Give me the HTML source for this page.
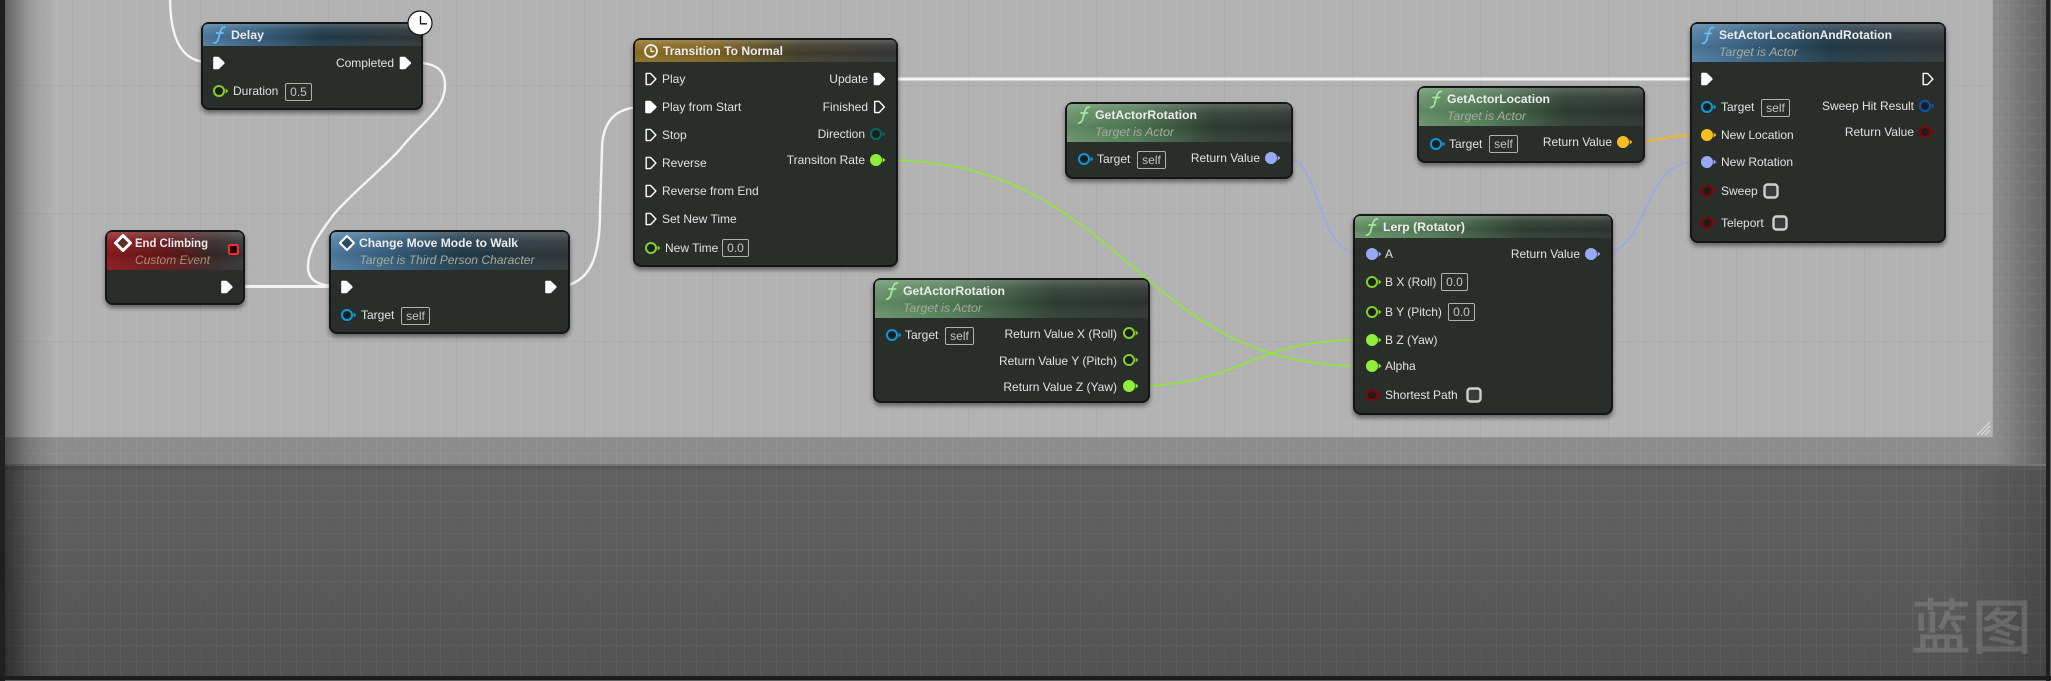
<!DOCTYPE html>
<html><head><meta charset="utf-8"><title>Blueprint</title>
<style>
html,body{margin:0;padding:0;background:#555;width:2051px;height:681px;overflow:hidden}
svg{display:block}
text{font-family:"Liberation Sans","Noto Sans CJK SC",sans-serif;font-size:12px;fill:#e2e2e2}
.t{font-weight:bold;fill:#ececec}
.s{font-style:italic;fill:#a3ad98}
.b{fill:#c4c4c4;text-anchor:middle}
.r{text-anchor:end}
.box{fill:none;stroke:#b0b0b0;stroke-width:1}
.cb{fill:#3a3c3a;stroke:#cfcfcf;stroke-width:2.4}
.n{fill:#2c2d2c;stroke:#121212;stroke-width:2}
.w{fill:none;stroke-linecap:round}
</style></head><body>
<svg width="2051" height="681" viewBox="0 0 2051 681" xmlns="http://www.w3.org/2000/svg">
<defs>
<pattern id="gm" width="16" height="16" patternUnits="userSpaceOnUse" x="8" y="5">
<rect width="1" height="16" fill="#fff" fill-opacity=".05"/><rect width="16" height="1" fill="#fff" fill-opacity=".05"/>
</pattern>
<pattern id="gM" width="128" height="128" patternUnits="userSpaceOnUse" x="72" y="85">
<rect width="1" height="128" fill="#000" fill-opacity=".06"/><rect width="128" height="1" fill="#000" fill-opacity=".06"/>
</pattern>
<linearGradient id="vl" x1="0" x2="1" y1="0" y2="0"><stop offset="0" stop-color="#000" stop-opacity=".45"/><stop offset=".5" stop-color="#000" stop-opacity=".13"/><stop offset="1" stop-color="#000" stop-opacity="0"/></linearGradient>
<linearGradient id="vr" x1="0" x2="1" y1="0" y2="0"><stop offset="0" stop-color="#8e8e8e"/><stop offset="1" stop-color="#636363"/></linearGradient>
<linearGradient id="vb" x1="0" x2="0" y1="0" y2="1"><stop offset="0" stop-color="#000" stop-opacity="0"/><stop offset="1" stop-color="#000" stop-opacity=".16"/></linearGradient>
<linearGradient id="vd" x1="0" x2="1" y1="0" y2="0"><stop offset="0" stop-color="#000" stop-opacity="0"/><stop offset="1" stop-color="#000" stop-opacity=".18"/></linearGradient>

<linearGradient id="blue" x1="0" x2="1" y1="0" y2="0"><stop offset="0" stop-color="#4d7ea4"/><stop offset=".25" stop-color="#376080"/><stop offset=".55" stop-color="#223c4c"/><stop offset=".8" stop-color="#2b3a42"/><stop offset="1" stop-color="#33383a"/></linearGradient>
<linearGradient id="green" x1="0" x2="1" y1="0" y2="0"><stop offset="0" stop-color="#67936a"/><stop offset=".3" stop-color="#527a55"/><stop offset=".65" stop-color="#2f4034"/><stop offset="1" stop-color="#2f3431"/></linearGradient>
<linearGradient id="red" x1="0" x2="1" y1="0" y2="0"><stop offset="0" stop-color="#8c1a1e"/><stop offset=".45" stop-color="#641719"/><stop offset=".8" stop-color="#362a2a"/><stop offset="1" stop-color="#363838"/></linearGradient>
<linearGradient id="gold" x1="0" x2="1" y1="0" y2="0"><stop offset="0" stop-color="#8e7026"/><stop offset=".3" stop-color="#7f6524"/><stop offset=".62" stop-color="#43402c"/><stop offset="1" stop-color="#363838"/></linearGradient>
<linearGradient id="hl" x1="0" x2="0" y1="0" y2="1"><stop offset="0" stop-color="#fff" stop-opacity=".2"/><stop offset=".25" stop-color="#fff" stop-opacity=".05"/><stop offset=".6" stop-color="#000" stop-opacity=".08"/><stop offset="1" stop-color="#fff" stop-opacity=".03"/></linearGradient>

<filter id="sh" x="-10%" y="-10%" width="120%" height="130%"><feDropShadow dx="0" dy="3" stdDeviation="2.5" flood-color="#000" flood-opacity=".45"/></filter>

<path id="ef" d="M0,-5.4 Q0,-6 .8,-6 H5 L10.6,-.6 Q11,0 10.6,.6 L5,6 H.8 Q0,6 0,5.4Z" fill="#fff" stroke="#fff" stroke-width=".6"/>
<path id="eo" d="M.7,-5.6 H5 L10.4,0 L5,5.6 H.7Z" fill="none" stroke="#fff" stroke-width="1.4" stroke-linejoin="round"/>
<g id="po"><circle r="5" fill="#1c1e1c" stroke="currentColor" stroke-width="2"/><path d="M6.6,-2.6 L9.4,0 L6.6,2.6Z" fill="currentColor"/></g>
<g id="pf"><circle r="6" fill="currentColor"/><path d="M6.6,-2.6 L9.4,0 L6.6,2.6Z" fill="currentColor"/></g>
<path id="fi" d="M-5.5,8 Q-2,8 -1,3 L1,-4 Q2,-8 5.5,-8 M-3,-2 H3.5" fill="none" stroke="currentColor" stroke-width="1.7" stroke-linecap="round"/>
</defs>

<!-- background -->
<rect width="2051" height="681" fill="#626262"/>
<rect x="5" y="0" width="1988" height="437" fill="#b2b2b2"/>
<rect x="5" y="437" width="1988" height="28" fill="#8d8d8d"/>
<rect x="1993" y="0" width="53" height="465" fill="url(#vr)"/>
<rect x="5" y="464" width="2041" height="2" fill="#757575"/>
<rect x="5" y="466" width="2041" height="4" fill="#585858"/>
<rect x="5" y="470" width="2041" height="206" fill="url(#vb)"/>
<rect x="1950" y="470" width="96" height="206" fill="url(#vd)"/>
<rect x="5" y="0" width="2041" height="676" fill="url(#gm)"/>
<rect x="5" y="0" width="2041" height="676" fill="url(#gM)"/>
<rect x="5" y="0" width="50" height="676" fill="url(#vl)"/>
<rect x="0" y="0" width="5" height="681" fill="#202020"/>
<rect x="2046" y="0" width="4" height="681" fill="#202020"/>
<rect x="0" y="676" width="2051" height="4" fill="#1c1c1c"/>
<!-- resize grip -->
<path d="M1977,435 L1990,422 M1981,435 L1990,426 M1985,435 L1990,430" stroke="#e4e4e4" stroke-width="1" fill="none"/>
<!-- watermark -->
<text x="1911" y="649" style="font-size:60px;letter-spacing:1px;font-weight:500;fill:#fff;fill-opacity:.15;font-family:'Noto Sans CJK SC',sans-serif">蓝图</text>

<!-- wires -->
<g class="wires">
<path class="w" stroke="#f4f4f4" stroke-width="2.4" d="M170,-4 C170,36 180,60 205,62"/>
<path class="w" stroke="#f4f4f4" stroke-width="2.4" d="M412,63 C433,62 445,68 445,85 C445,110 422,122 402,147 C390,162 350,195 335,213 C318,235 308,250 308,267 C308,280 318,285 332,286"/>
<path class="w" stroke="#f4f4f4" stroke-width="3" d="M240,286.5 L332,286.5"/>
<path class="w" stroke="#f4f4f4" stroke-width="2.4" d="M560,287 C588,283 600,262 600,212 L602,150 C602,122 615,108 640,107"/>
<path class="w" stroke="#f6f6f6" stroke-width="3" d="M890,79 L1695,79"/>
<path class="w" stroke="#8ee63e" stroke-width="1.8" d="M885,160 C1125,160 1135,366 1360,366"/>
<path class="w" stroke="#8ee63e" stroke-width="1.8" d="M1135,386 C1240,386 1250,340 1358,340"/>
<path class="w" stroke="#98a8ea" stroke-width="1.6" d="M1285,158 C1322,158 1316,254 1360,254"/>
<path class="w" stroke="#98a8ea" stroke-width="1.6" d="M1600,254 C1650,254 1640,162 1695,162"/>
<path class="w" stroke="#f3b924" stroke-width="2" d="M1630,142 C1660,142 1665,135 1700,135"/>
</g>

<!-- Delay -->
<g filter="url(#sh)"><rect class="n" x="202" y="23" width="220" height="86" rx="7"/></g>
<path d="M203,46 V29 Q203,24 208,24 H416 Q421,24 421,29 V46Z" fill="url(#blue)"/><path d="M203,46 V29 Q203,24 208,24 H416 Q421,24 421,29 V46Z" fill="url(#hl)"/>
<use href="#fi" x="219.5" y="35" color="#6cbcf2"/>
<text class="t" x="231" y="39" textLength="33" lengthAdjust="spacingAndGlyphs">Delay</text>
<circle cx="420" cy="23" r="12" fill="#fff" stroke="#111" stroke-width="1.2"/>
<path d="M420.5,16 V23.8 H427" fill="none" stroke="#111" stroke-width="1.3"/>
<use href="#ef" x="213.5" y="63"/>
<text class="r" x="394" y="67">Completed</text>
<use href="#ef" x="400" y="63"/>
<use href="#po" x="219" y="91" color="#7fd22c"/>
<text x="233" y="95">Duration</text>
<rect class="box" x="285.5" y="83.5" width="26" height="17" rx="1.5"/><text class="b" x="298.5" y="96">0.5</text>

<!-- End Climbing -->
<g filter="url(#sh)"><rect class="n" x="106" y="231" width="138" height="73" rx="7"/></g>
<path d="M107,270 V237 Q107,232 112,232 H238 Q243,232 243,237 V270Z" fill="url(#red)"/><path d="M107,270 V237 Q107,232 112,232 H238 Q243,232 243,237 V270Z" fill="url(#hl)"/>
<path d="M123,235.5 L130.5,243 L123,250.5 L115.5,243Z" fill="#532" stroke="#fff" stroke-width="3" stroke-linejoin="round"/>
<text class="t" x="135" y="247" textLength="73" lengthAdjust="spacingAndGlyphs">End Climbing</text>
<text class="s" x="135" y="264" textLength="75" lengthAdjust="spacingAndGlyphs" style="fill:#ab8d72">Custom Event</text>
<rect x="229" y="245" width="9" height="9" rx="1.5" fill="#200" stroke="#ff2b2b" stroke-width="2"/>
<use href="#ef" x="221.5" y="287"/>

<!-- Change Move Mode -->
<g filter="url(#sh)"><rect class="n" x="330" y="231" width="239" height="102" rx="7"/></g>
<path d="M331,270 V237 Q331,232 336,232 H563 Q568,232 568,237 V270Z" fill="url(#blue)"/><path d="M331,270 V237 Q331,232 336,232 H563 Q568,232 568,237 V270Z" fill="url(#hl)"/>
<path d="M347,236 L354,243 L347,250 L340,243Z" fill="#2c4a60" stroke="#fff" stroke-width="2" stroke-linejoin="round"/>
<text class="t" x="359" y="247" textLength="159" lengthAdjust="spacingAndGlyphs">Change Move Mode to Walk</text>
<text class="s" x="359.5" y="264" textLength="175" lengthAdjust="spacingAndGlyphs">Target is Third Person Character</text>
<use href="#ef" x="341.5" y="287"/><use href="#ef" x="545.5" y="287"/>
<use href="#po" x="347" y="315" color="#0a9ae2"/>
<text x="361" y="319">Target</text>
<rect class="box" x="401.5" y="307.5" width="28" height="17" rx="1.5"/><text class="b" x="415.5" y="320">self</text>

<!-- Transition -->
<g filter="url(#sh)"><rect class="n" x="634" y="39" width="263" height="227" rx="7"/></g>
<path d="M635,62 V45 Q635,40 640,40 H891 Q896,40 896,45 V62Z" fill="url(#gold)"/><path d="M635,62 V45 Q635,40 640,40 H891 Q896,40 896,45 V62Z" fill="url(#hl)"/>
<circle cx="651" cy="51" r="6" fill="none" stroke="#f0f0f0" stroke-width="1.8"/><path d="M651,47.5 V51.5 H654.5" fill="none" stroke="#f0f0f0" stroke-width="1.3"/>
<text class="t" x="663" y="55" textLength="120" lengthAdjust="spacingAndGlyphs">Transition To Normal</text>
<use href="#eo" x="645.5" y="79"/><text x="662" y="83">Play</text>
<use href="#ef" x="645.5" y="107"/><text x="662" y="111">Play from Start</text>
<use href="#eo" x="645.5" y="135"/><text x="662" y="139">Stop</text>
<use href="#eo" x="645.5" y="163"/><text x="662" y="167">Reverse</text>
<use href="#eo" x="645.5" y="191"/><text x="662" y="195">Reverse from End</text>
<use href="#eo" x="645.5" y="219"/><text x="662" y="223">Set New Time</text>
<use href="#po" x="651" y="248" color="#7fd22c"/><text x="665" y="252">New Time</text>
<rect class="box" x="722.5" y="239.5" width="26" height="17" rx="1.5"/><text class="b" x="735.5" y="252">0.0</text>
<text class="r" x="868" y="83">Update</text><use href="#ef" x="874" y="79"/>
<text class="r" x="868" y="111">Finished</text><use href="#eo" x="874" y="107"/>
<text class="r" x="865" y="138">Direction</text><use href="#po" x="876" y="134" color="#006b62"/>
<text class="r" x="865" y="164">Transiton Rate</text><use href="#pf" x="876" y="160" color="#90ee3a"/>

<!-- GetActorRotation top -->
<g filter="url(#sh)"><rect class="n" x="1066" y="103" width="226" height="75" rx="7"/></g>
<path d="M1067,142 V109 Q1067,104 1072,104 H1286 Q1291,104 1291,109 V142Z" fill="url(#green)"/><path d="M1067,142 V109 Q1067,104 1072,104 H1286 Q1291,104 1291,109 V142Z" fill="url(#hl)"/>
<use href="#fi" x="1084" y="115" color="#a4e8a0"/>
<text class="t" x="1095" y="119" textLength="102" lengthAdjust="spacingAndGlyphs">GetActorRotation</text>
<text class="s" x="1095" y="136" textLength="79" lengthAdjust="spacingAndGlyphs">Target is Actor</text>
<use href="#po" x="1084" y="159" color="#0a9ae2"/><text x="1097" y="163">Target</text>
<rect class="box" x="1137.5" y="151.5" width="28" height="17" rx="1.5"/><text class="b" x="1151.5" y="164">self</text>
<text class="r" x="1260" y="162">Return Value</text><use href="#pf" x="1271" y="158" color="#9aa9f4"/>

<!-- GetActorRotation bottom -->
<g filter="url(#sh)"><rect class="n" x="874" y="279" width="275" height="123" rx="7"/></g>
<path d="M875,318 V285 Q875,280 880,280 H1143 Q1148,280 1148,285 V318Z" fill="url(#green)"/><path d="M875,318 V285 Q875,280 880,280 H1143 Q1148,280 1148,285 V318Z" fill="url(#hl)"/>
<use href="#fi" x="892" y="291" color="#a4e8a0"/>
<text class="t" x="903" y="295" textLength="102" lengthAdjust="spacingAndGlyphs">GetActorRotation</text>
<text class="s" x="903" y="312" textLength="79" lengthAdjust="spacingAndGlyphs">Target is Actor</text>
<use href="#po" x="892" y="335" color="#0a9ae2"/><text x="905" y="339">Target</text>
<rect class="box" x="945.5" y="327.5" width="28" height="17" rx="1.5"/><text class="b" x="959.5" y="340">self</text>
<text class="r" x="1117" y="338">Return Value X (Roll)</text><use href="#po" x="1129" y="333" color="#7fd22c"/>
<text class="r" x="1117" y="365">Return Value Y (Pitch)</text><use href="#po" x="1129" y="360" color="#7fd22c"/>
<text class="r" x="1117" y="391">Return Value Z (Yaw)</text><use href="#pf" x="1129" y="386" color="#90ee3a"/>

<!-- GetActorLocation -->
<g filter="url(#sh)"><rect class="n" x="1418" y="87" width="226" height="75" rx="7"/></g>
<path d="M1419,126 V93 Q1419,88 1424,88 H1638 Q1643,88 1643,93 V126Z" fill="url(#green)"/><path d="M1419,126 V93 Q1419,88 1424,88 H1638 Q1643,88 1643,93 V126Z" fill="url(#hl)"/>
<use href="#fi" x="1436" y="99.5" color="#a4e8a0"/>
<text class="t" x="1447" y="103" textLength="103" lengthAdjust="spacingAndGlyphs">GetActorLocation</text>
<text class="s" x="1447" y="120" textLength="79" lengthAdjust="spacingAndGlyphs">Target is Actor</text>
<use href="#po" x="1436" y="144" color="#0a9ae2"/><text x="1449" y="148">Target</text>
<rect class="box" x="1489.5" y="135.5" width="28" height="17" rx="1.5"/><text class="b" x="1503.5" y="148">self</text>
<text class="r" x="1612" y="146">Return Value</text><use href="#pf" x="1623" y="142" color="#f8bd20"/>

<!-- Lerp -->
<g filter="url(#sh)"><rect class="n" x="1354" y="215" width="258" height="199" rx="7"/></g>
<path d="M1355,238 V221 Q1355,216 1360,216 H1606 Q1611,216 1611,221 V238Z" fill="url(#green)"/><path d="M1355,238 V221 Q1355,216 1360,216 H1606 Q1611,216 1611,221 V238Z" fill="url(#hl)"/>
<use href="#fi" x="1372" y="227" color="#a4e8a0"/>
<text class="t" x="1383" y="231" textLength="82" lengthAdjust="spacingAndGlyphs">Lerp (Rotator)</text>
<use href="#pf" x="1372" y="254" color="#9aa9f4"/><text x="1385" y="258">A</text>
<use href="#po" x="1372" y="282" color="#7fd22c"/><text x="1385" y="286">B X (Roll)</text>
<rect class="box" x="1441.5" y="273.5" width="26" height="17" rx="1.5"/><text class="b" x="1454.5" y="286">0.0</text>
<use href="#po" x="1372" y="312" color="#7fd22c"/><text x="1385" y="316">B Y (Pitch)</text>
<rect class="box" x="1448.5" y="303.5" width="26" height="17" rx="1.5"/><text class="b" x="1461.5" y="316">0.0</text>
<use href="#pf" x="1372" y="340" color="#90ee3a"/><text x="1385" y="344">B Z (Yaw)</text>
<use href="#pf" x="1372" y="366" color="#90ee3a"/><text x="1385" y="370">Alpha</text>
<use href="#po" x="1372" y="395" color="#8a0000"/><text x="1385" y="399">Shortest Path</text>
<rect class="cb" x="1467.5" y="388.5" width="13" height="13" rx="3"/>
<text class="r" x="1580" y="258">Return Value</text><use href="#pf" x="1591" y="254" color="#9aa9f4"/>

<!-- SetActor -->
<g filter="url(#sh)"><rect class="n" x="1691" y="23" width="254" height="219" rx="7"/></g>
<path d="M1692,62 V29 Q1692,24 1697,24 H1939 Q1944,24 1944,29 V62Z" fill="url(#blue)"/><path d="M1692,62 V29 Q1692,24 1697,24 H1939 Q1944,24 1944,29 V62Z" fill="url(#hl)"/>
<use href="#fi" x="1708" y="35.500" color="#6cbcf2"/>
<text class="t" x="1719" y="39" textLength="173" lengthAdjust="spacingAndGlyphs">SetActorLocationAndRotation</text>
<text class="s" x="1719" y="56" textLength="79" lengthAdjust="spacingAndGlyphs">Target is Actor</text>
<use href="#ef" x="1701.5" y="79"/><use href="#eo" x="1922.5" y="79"/>
<use href="#po" x="1707" y="107" color="#0a9ae2"/><text x="1721" y="111">Target</text>
<rect class="box" x="1761.5" y="99.5" width="28" height="17" rx="1.5"/><text class="b" x="1775.5" y="112">self</text>
<use href="#pf" x="1707" y="135" color="#f8bd20"/><text x="1721" y="139">New Location</text>
<use href="#pf" x="1707" y="162" color="#9aa9f4"/><text x="1721" y="166">New Rotation</text>
<use href="#po" x="1707" y="191" color="#8a0000"/><text x="1721" y="195">Sweep</text>
<rect class="cb" x="1764.5" y="184.5" width="13" height="13" rx="3"/>
<use href="#po" x="1707" y="223" color="#8a0000"/><text x="1721" y="227">Teleport</text>
<rect class="cb" x="1773.5" y="216.5" width="13" height="13" rx="3"/>
<text class="r" x="1914" y="110">Sweep Hit Result</text><use href="#po" x="1925" y="106" color="#0a55b8"/>
<text class="r" x="1914" y="136">Return Value</text><use href="#po" x="1925" y="132" color="#8a0000"/>
</svg>
</body></html>
